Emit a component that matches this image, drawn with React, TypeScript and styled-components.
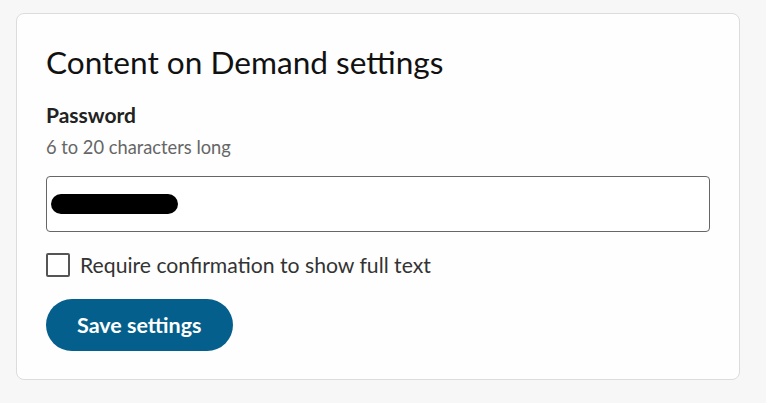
import styled, { createGlobalStyle } from 'styled-components'

const GlobalStyle = createGlobalStyle`
  body {
    margin: 0;
    background: #f7f7f7;
    font-family: Lato, "Noto Sans", sans-serif;
  }
`

const Page = styled.div`
  padding: 13px 26px 23px 16px;
`

const Card = styled.section`
  background: #fefefe;
  border: 1px solid #dcdcdc;
  border-radius: 8px;
  padding: 26px 29px 28px;
  display: flex;
  flex-direction: column;
`

const Title = styled.h1`
  margin: 0;
  font-size: 31.6px;
  line-height: 44px;
  font-weight: 400;
  color: #111;
`

const Label = styled.label`
  margin-top: 18px;
  font-size: 21px;
  line-height: 26px;
  font-weight: 700;
  color: #222;
`

const Hint = styled.p`
  margin: 7px 0 0;
  font-size: 18.3px;
  line-height: 24px;
  color: #666;
`

const Field = styled.div`
  margin-top: 17px;
  height: 56px;
  box-sizing: border-box;
  border: 1px solid #666;
  border-radius: 4px;
  background: #fff;
  display: flex;
  align-items: center;
  padding: 0 4px;
`

const Redacted = styled.span`
  width: 127px;
  height: 20px;
  border-radius: 10px;
  background: #000;
`

const CheckRow = styled.label`
  margin-top: 21px;
  display: flex;
  align-items: center;
  gap: 10px;
  font-size: 21.2px;
  line-height: 24px;
  color: #333;
`

const Box = styled.span`
  flex: none;
  width: 24px;
  height: 24px;
  box-sizing: border-box;
  border: 2px solid #555;
  border-radius: 2px;
  background: #fff;
`

const SaveButton = styled.button`
  margin-top: 22px;
  align-self: flex-start;
  height: 52px;
  padding: 0 31px;
  border: none;
  border-radius: 26px;
  background: #055f8c;
  color: #fff;
  font-family: inherit;
  font-size: 21.5px;
  font-weight: 700;
  cursor: pointer;
`

export default function App() {
  return (
    <>
      <GlobalStyle />
      <Page>
        <Card>
          <Title>Content on Demand settings</Title>
          <Label>Password</Label>
          <Hint>6 to 20 characters long</Hint>
          <Field>
            <Redacted />
          </Field>
          <CheckRow>
            <Box />
            Require confirmation to show full text
          </CheckRow>
          <SaveButton>Save settings</SaveButton>
        </Card>
      </Page>
    </>
  )
}
